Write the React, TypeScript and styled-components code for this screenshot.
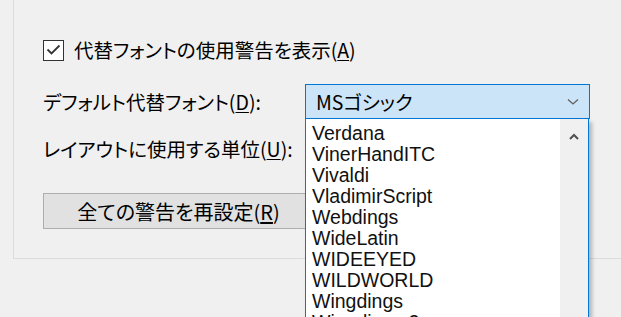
import styled, { createGlobalStyle } from "styled-components";

const GlobalStyle = createGlobalStyle`
  html, body {
    margin: 0;
    padding: 0;
    background: #f0f0f0;
    overflow: hidden;
    width: 621px;
    height: 317px;
  }
  body {
    font-family: "Noto Sans CJK JP", "Noto Sans", sans-serif;
    color: #000;
  }
`;

const Page = styled.div`
  padding-left: 13px;
  height: 317px;
  box-sizing: border-box;
`;

const GroupBox = styled.div`
  height: 259px;
  box-sizing: border-box;
  border-left: 1px solid #dcdcdc;
  border-bottom: 1px solid #dcdcdc;
  padding: 39px 0 0 29px;
  display: flex;
  flex-direction: column;
`;

const Label = styled.span`
  font-size: 19.5px;
  line-height: 20px;
  font-feature-settings: "palt";
  white-space: nowrap;
`;

const Accel = styled.u`
  text-decoration: underline;
  text-underline-offset: 2px;
`;

const CheckRow = styled.label`
  display: flex;
  align-items: center;
  gap: 10px;
  height: 22px;
`;

const CheckBox = styled.span`
  width: 21px;
  height: 21px;
  box-sizing: border-box;
  border: 1px solid #333;
  background: #fff;
  display: flex;
  align-items: center;
  justify-content: center;
`;

const FieldRow = styled.div<{ $top: number; $height: number }>`
  display: grid;
  grid-template-columns: 262px 285px;
  align-items: center;
  margin-top: ${(p) => p.$top}px;
  height: ${(p) => p.$height}px;
`;

const ComboWrap = styled.div`
  position: relative;
  height: 35px;
`;

const Combo = styled.div`
  height: 35px;
  box-sizing: border-box;
  border: 1px solid #0078d7;
  background: #cce4f7;
  display: flex;
  align-items: center;
  justify-content: space-between;
  padding: 0 10px 0 10px;
`;

const ComboText = styled.span`
  font-size: 19.5px;
  font-feature-settings: "palt";
`;

const DropList = styled.div`
  position: absolute;
  left: 0;
  top: 35px;
  width: 284px;
  height: 220px;
  box-sizing: border-box;
  border: 1px solid #0078d7;
  border-top: none;
  background: #fff;
  box-shadow: 3px 3px 4px rgba(0, 0, 0, 0.25);
  display: flex;
  z-index: 2;
`;

const Items = styled.ul`
  flex: 1;
  list-style: none;
  margin: 0;
  padding: 4px 0 0 6px;
`;

const Item = styled.li`
  font-family: "Liberation Sans", Arial, sans-serif;
  font-size: 19.5px;
  line-height: 21px;
  height: 21px;
  white-space: nowrap;
  color: #111;
`;

const ScrollBar = styled.div`
  width: 28px;
  background: #f0f0f0;
  display: flex;
  justify-content: center;
  padding-top: 14px;
`;

const Button = styled.button`
  margin-top: 34px;
  width: 271px;
  height: 36px;
  box-sizing: border-box;
  border: 1px solid #adadad;
  background: #e1e1e1;
  font-family: inherit;
  font-size: 20px;
  font-feature-settings: "palt";
  color: #000;
  padding: 0;
`;

const fonts = [
  "Verdana",
  "VinerHandITC",
  "Vivaldi",
  "VladimirScript",
  "Webdings",
  "WideLatin",
  "WIDEEYED",
  "WILDWORLD",
  "Wingdings",
  "Wingdings 2",
];

export default function App() {
  return (
    <Page>
      <GlobalStyle />
      <GroupBox>
        <CheckRow>
          <CheckBox>
            <svg width="15" height="12" viewBox="0 0 15 12">
              <path d="M1.5 5.5 L5.5 9.5 L13.5 1.5" fill="none" stroke="#333" strokeWidth="1.8" />
            </svg>
          </CheckBox>
          <Label>
            代替フォントの使用警告を表示(<Accel>A</Accel>)
          </Label>
        </CheckRow>

        <FieldRow $top={23} $height={35}>
          <Label>
            デフォルト代替フォント(<Accel>D</Accel>):
          </Label>
          <ComboWrap>
            <Combo>
              <ComboText>MSゴシック</ComboText>
              <svg width="12" height="8" viewBox="0 0 12 8">
                <path d="M1 1.5 L6 6 L11 1.5" fill="none" stroke="#606060" strokeWidth="1.3" />
              </svg>
            </Combo>
            <DropList>
              <Items>
                {fonts.map((f) => (
                  <Item key={f}>{f}</Item>
                ))}
              </Items>
              <ScrollBar>
                <svg width="10" height="7" viewBox="0 0 10 7">
                  <path d="M1 6 L5 2 L9 6" fill="none" stroke="#505050" strokeWidth="2" />
                </svg>
              </ScrollBar>
            </DropList>
          </ComboWrap>
        </FieldRow>

        <FieldRow $top={20} $height={20}>
          <Label>
            レイアウトに使用する単位(<Accel>U</Accel>):
          </Label>
        </FieldRow>

        <Button>
          全ての警告を再設定(<Accel>R</Accel>)
        </Button>
      </GroupBox>
    </Page>
  );
}
